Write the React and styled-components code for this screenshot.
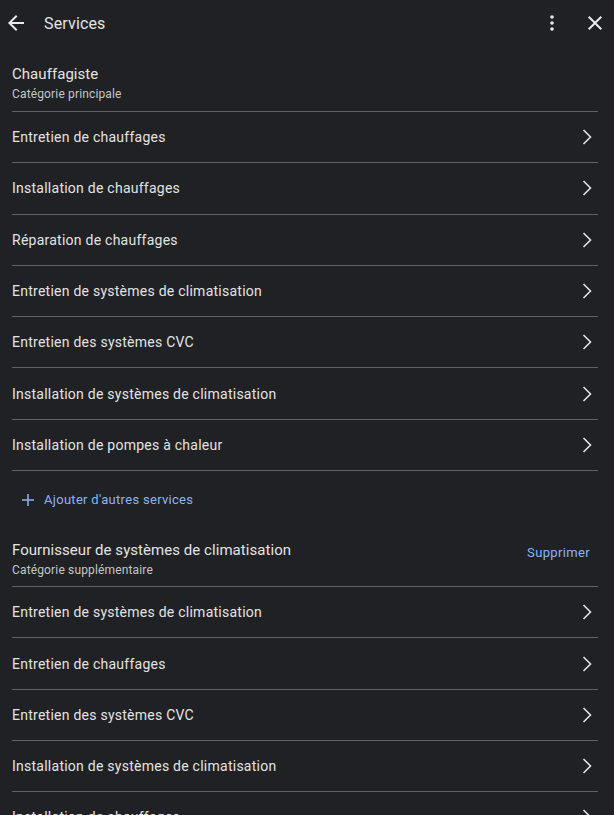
import styled, { createGlobalStyle } from "styled-components"

const GlobalStyle = createGlobalStyle`
    html, body {
        margin: 0;
        padding: 0;
        background: #202124;
        height: 815px;
        overflow: hidden;
    }
    body {
        font-family: Roboto, "Noto Sans", Arial, sans-serif;
        color: #e3e3e3;
        -webkit-font-smoothing: antialiased;
    }
`

const mainServices = [
    "Entretien de chauffages",
    "Installation de chauffages",
    "Réparation de chauffages",
    "Entretien de systèmes de climatisation",
    "Entretien des systèmes CVC",
    "Installation de systèmes de climatisation",
    "Installation de pompes à chaleur",
]

const extraServices = [
    "Entretien de systèmes de climatisation",
    "Entretien de chauffages",
    "Entretien des systèmes CVC",
    "Installation de systèmes de climatisation",
    "Installation de chauffages",
]

const BackIcon = () => (
    <svg width="24" height="24" viewBox="0 0 24 24" fill="currentColor">
        <path d="M20 11H7.83l5.59-5.59L12 4l-8 8 8 8 1.41-1.41L7.83 13H20v-2z" />
    </svg>
)

const MoreIcon = () => (
    <svg width="24" height="24" viewBox="0 0 24 24" fill="currentColor">
        <circle cx="12" cy="6" r="1.8" />
        <circle cx="12" cy="12" r="1.8" />
        <circle cx="12" cy="18" r="1.8" />
    </svg>
)

const CloseIcon = () => (
    <svg width="24" height="24" viewBox="0 0 24 24" fill="currentColor">
        <path d="M19 6.41L17.59 5 12 10.59 6.41 5 5 6.41 10.59 12 5 17.59 6.41 19 12 13.41 17.59 19 19 17.59 13.41 12z" />
    </svg>
)

const ChevronIcon = () => (
    <svg width="24" height="24" viewBox="0 0 24 24" fill="none" stroke="currentColor" strokeWidth="1.6">
        <polyline points="8.5,5 15.5,12 8.5,19" />
    </svg>
)

const PlusIcon = () => (
    <svg width="14" height="14" viewBox="0 0 14 14" fill="none" stroke="currentColor" strokeWidth="1.5">
        <line x1="7" y1="1" x2="7" y2="13" />
        <line x1="1" y1="7" x2="13" y2="7" />
    </svg>
)

const ServiceRow = ({ label }) => (
    <Row>
        <RowLabel>{label}</RowLabel>
        <RowChevron><ChevronIcon /></RowChevron>
    </Row>
)

const App = () => {
    return (
        <Page>
            <GlobalStyle />
            <TopBar>
                <IconButton><BackIcon /></IconButton>
                <Title>Services</Title>
                <IconButton><MoreIcon /></IconButton>
                <IconButton $close><CloseIcon /></IconButton>
            </TopBar>

            <Section>
                <SectionHead>
                    <HeadText>
                        <HeadTitle>Chauffagiste</HeadTitle>
                        <HeadSub>Catégorie principale</HeadSub>
                    </HeadText>
                </SectionHead>
                {mainServices.map((s) => <ServiceRow key={s} label={s} />)}
            </Section>

            <AddRow>
                <PlusIcon />
                <span>Ajouter d'autres services</span>
            </AddRow>

            <Section>
                <SectionHead $extra>
                    <HeadText>
                        <HeadTitle>Fournisseur de systèmes de climatisation</HeadTitle>
                        <HeadSub>Catégorie supplémentaire</HeadSub>
                    </HeadText>
                    <LinkButton>Supprimer</LinkButton>
                </SectionHead>
                {extraServices.map((s) => <ServiceRow key={s} label={s} />)}
            </Section>
        </Page>
    )
}

const Page = styled.div`
    width: 614px;
    height: 815px;
    overflow: hidden;
    background: #202124;
`

const TopBar = styled.header`
    height: 48px;
    display: flex;
    align-items: center;
    padding: 0 7px 0 4px;
`

const IconButton = styled.div`
    width: 24px;
    height: 24px;
    display: flex;
    align-items: center;
    justify-content: center;
    color: #e8eaed;
    margin-left: ${({ $close }) => ($close ? "19px" : "0")};
    margin-top: -2px;
`

const Title = styled.h1`
    flex: 1;
    margin: -1px 0 0 16px;
    font-size: 16px;
    font-weight: 400;
    letter-spacing: 0.15px;
    color: #e3e3e3;
`

const Section = styled.section`
    padding: 0 16px 0 12px;
`

const SectionHead = styled.div`
    display: flex;
    align-items: center;
    justify-content: space-between;
    padding: ${({ $extra }) => ($extra ? "16px 0 8px" : "16px 0 9px")};
    border-bottom: 1px solid #5f6368;
`

const HeadText = styled.div`
    display: flex;
    flex-direction: column;
`

const HeadTitle = styled.div`
    font-size: 15px;
    line-height: 21px;
    font-weight: 400;
    color: #e3e3e3;
    letter-spacing: 0.05px;
`

const HeadSub = styled.div`
    font-size: 12px;
    line-height: 16px;
    color: #c4c7c5;
    letter-spacing: 0.15px;
    margin-top: 1px;
`

const LinkButton = styled.div`
    font-size: 13px;
    font-weight: 400;
    color: #8ab4f8;
    letter-spacing: 0.35px;
    padding: 0 8px 14px 0;
`

const Row = styled.div`
    height: 50.3px;
    display: flex;
    align-items: center;
    justify-content: space-between;
    border-bottom: 1px solid #5f6368;
`

const RowLabel = styled.span`
    font-size: 14px;
    letter-spacing: 0.25px;
    color: #e3e3e3;
`

const RowChevron = styled.span`
    display: flex;
    color: #e3e3e3;
    margin-right: -1px;
`

const AddRow = styled.div`
    height: 53px;
    display: flex;
    align-items: center;
    gap: 9px;
    padding: 4px 0 0 21px;
    box-sizing: border-box;
    color: #8ab4f8;
    font-size: 13px;
    font-weight: 400;
    letter-spacing: 0.3px;
`

export default App
